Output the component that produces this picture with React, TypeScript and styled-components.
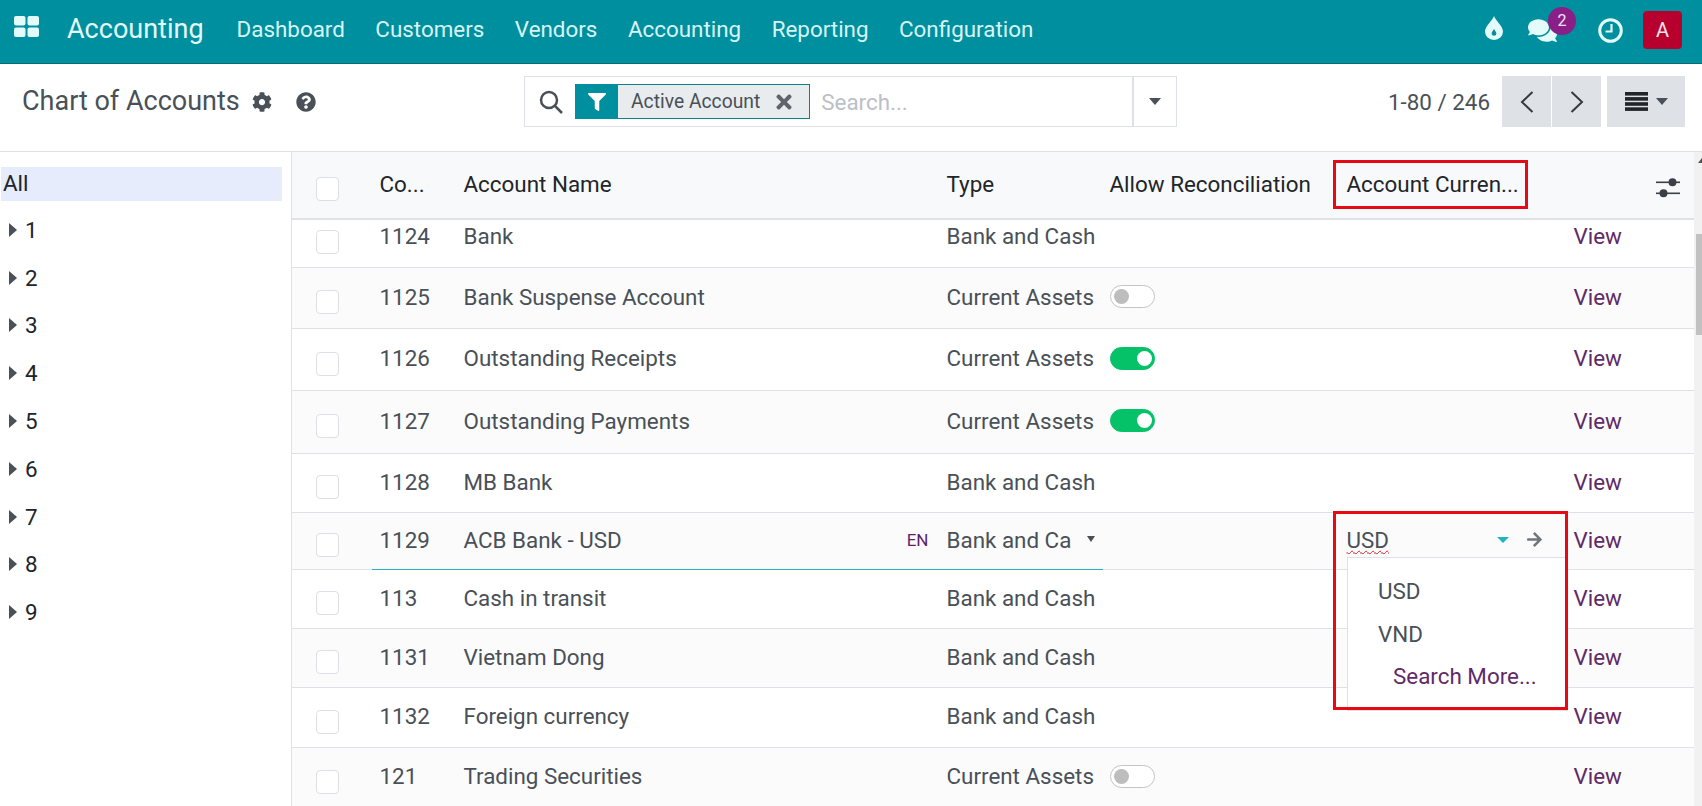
import styled, { createGlobalStyle } from "styled-components";
import { FaCog, FaQuestionCircle, FaFilter, FaComments, FaTimes, FaArrowRight } from "react-icons/fa";

const GlobalStyle = createGlobalStyle`
  html, body {
    margin: 0;
    height: 100%;
    overflow: hidden;
    background: #ffffff;
  }

  * {
    box-sizing: border-box;
  }

  body {
    font-family: Roboto, "Liberation Sans", sans-serif;
    font-size: 22.4px;
    color: #495057;
  }
`;

const MENU = ["Dashboard", "Customers", "Vendors", "Accounting", "Reporting", "Configuration"];
const TREE = ["1", "2", "3", "4", "5", "6", "7", "8", "9"];

type Account = {
  code: string;
  name: string;
  type: string;
  height: number;
  reconcile?: boolean;
  editing?: boolean;
};

const ACCOUNTS: Account[] = [
  { code: "1124", name: "Bank", type: "Bank and Cash", height: 60 },
  { code: "1125", name: "Bank Suspense Account", type: "Current Assets", height: 61, reconcile: false },
  { code: "1126", name: "Outstanding Receipts", type: "Current Assets", height: 62, reconcile: true },
  { code: "1127", name: "Outstanding Payments", type: "Current Assets", height: 63, reconcile: true },
  { code: "1128", name: "MB Bank", type: "Bank and Cash", height: 59 },
  { code: "1129", name: "ACB Bank - USD", type: "Bank and Ca", height: 57, editing: true },
  { code: "113", name: "Cash in transit", type: "Bank and Cash", height: 59 },
  { code: "1131", name: "Vietnam Dong", type: "Bank and Cash", height: 59 },
  { code: "1132", name: "Foreign currency", type: "Bank and Cash", height: 60 },
  { code: "121", name: "Trading Securities", type: "Current Assets", height: 60, reconcile: false },
];

const App = () => {
  return (
    <Page>
      <GlobalStyle />
      <Navbar>
        <AppsIcon viewBox="0 0 25 21">
          <rect x="0" y="0" width="11.5" height="9.5" rx="2" />
          <rect x="13.5" y="0" width="11.5" height="9.5" rx="2" />
          <rect x="0" y="11.5" width="11.5" height="9.5" rx="2" />
          <rect x="13.5" y="11.5" width="11.5" height="9.5" rx="2" />
        </AppsIcon>
        <Brand>Accounting</Brand>
        <Menu>
          {MENU.map((item) => (
            <MenuItem key={item}>{item}</MenuItem>
          ))}
        </Menu>
        <Systray>
          <DropIcon width="18" height="24" viewBox="0 0 18 24" fill="#e3fbfb">
            <path
              fillRule="evenodd"
              d="M9 0C10 4 18 10 18 15.5A9 8.5 0 0 1 0 15.5C0 10 8 4 9 0ZM9 13C8 15 6.6 16 6.6 17.4A2.4 2.4 0 0 0 11.4 17.4C11.4 16 10 15 9 13Z"
            />
          </DropIcon>
          <ChatButton>
            <FaComments size={29} color="#e3fbfb" />
            <Badge>2</Badge>
          </ChatButton>
          <svg width="25" height="25" viewBox="0 0 25 25" fill="none" stroke="#e3fbfb">
            <circle cx="12.5" cy="12.5" r="10.8" strokeWidth="3" />
            <path d="M13.5 6V13.5H7.5" strokeWidth="2.2" />
          </svg>
          <Avatar>A</Avatar>
        </Systray>
      </Navbar>

      <ControlPanel>
        <TitleBox>
          <Title>Chart of Accounts</Title>
          <FaCog size={20} color="#495057" />
          <HelpIcon size={20} color="#495057" />
        </TitleBox>
        <SearchBox>
          <SearchMain>
            <svg width="24" height="24" viewBox="0 0 24 24" fill="none" stroke="#495057" strokeWidth="2.5">
              <circle cx="10" cy="10" r="8" />
              <path d="M16 16L23 23" />
            </svg>
            <Facet>
              <FacetIcon>
                <FaFilter size={18} color="#ffffff" />
              </FacetIcon>
              <FacetLabel>Active Account</FacetLabel>
              <FacetClose>
                <FaTimes size={22} color="#5f656b" />
              </FacetClose>
            </Facet>
            <SearchPlaceholder>Search...</SearchPlaceholder>
          </SearchMain>
          <SearchToggle>
            <Caret />
          </SearchToggle>
        </SearchBox>
        <PagerBox>
          <PagerText>1-80 / 246</PagerText>
          <PagerButtons>
            <GreyButton>
              <svg width="14" height="22" viewBox="0 0 14 22" fill="none" stroke="#343a40" strokeWidth="2">
                <path d="M12.5 1L2 11L12.5 21" />
              </svg>
            </GreyButton>
            <GreyButton>
              <svg width="14" height="22" viewBox="0 0 14 22" fill="none" stroke="#343a40" strokeWidth="2">
                <path d="M1.5 1L12 11L1.5 21" />
              </svg>
            </GreyButton>
          </PagerButtons>
          <ViewButton>
            <svg width="23" height="19" viewBox="0 0 23 19" fill="#212529">
              <rect y="0" width="23" height="3.6" />
              <rect y="5.1" width="23" height="3.6" />
              <rect y="10.2" width="23" height="3.6" />
              <rect y="15.3" width="23" height="3.6" />
            </svg>
            <Caret />
          </ViewButton>
        </PagerBox>
      </ControlPanel>

      <Content>
        <Sidebar>
          <AllRow>All</AllRow>
          {TREE.map((item) => (
            <TreeRow key={item}>
              <TreeArrow />
              {item}
            </TreeRow>
          ))}
        </Sidebar>

        <TableArea>
          <HeadRow>
            <CheckCell>
              <Checkbox />
            </CheckCell>
            <Cell>Co...</Cell>
            <Cell>Account Name</Cell>
            <Cell>Type</Cell>
            <Cell>Allow Reconciliation</Cell>
            <Cell>
              Account Curren...
              <HeadMark />
            </Cell>
            <OptionalCell>
              <svg width="24" height="20" viewBox="0 0 24 20" fill="#3b4046">
                <rect y="3.5" width="24" height="1.6" />
                <rect y="14.5" width="24" height="1.6" />
                <circle cx="16.5" cy="4.3" r="4" />
                <circle cx="7.5" cy="15.3" r="4" />
              </svg>
            </OptionalCell>
          </HeadRow>

          <BodyClip>
            <BodyScroll>
              {ACCOUNTS.map((account, index) => (
                <Row key={account.code} $height={account.height} $striped={index % 2 === 1}>
                  <CheckCell>
                    <Checkbox />
                  </CheckCell>
                  <Cell>{account.code}</Cell>
                  <NameCell>
                    {account.name}
                    {account.editing && <LangTag>EN</LangTag>}
                  </NameCell>
                  {account.editing ? (
                    <Cell>
                      <TypeValue>{account.type}</TypeValue>
                      <SmallCaret />
                    </Cell>
                  ) : (
                    <Cell>{account.type}</Cell>
                  )}
                  <Cell>{account.reconcile !== undefined && <Toggle $on={account.reconcile} />}</Cell>
                  {account.editing ? (
                    <CurrencyCell>
                      <CurrencyValue>USD</CurrencyValue>
                      <TealCaret />
                      <FaArrowRight size={17} color="#71757a" />
                      <Dropdown>
                        <DropdownItem>USD</DropdownItem>
                        <DropdownItem>VND</DropdownItem>
                        <SearchMore>Search More...</SearchMore>
                      </Dropdown>
                      <DropdownMark />
                    </CurrencyCell>
                  ) : (
                    <Cell />
                  )}
                  <ViewCell>View</ViewCell>
                  {account.editing && <EditLine />}
                </Row>
              ))}
            </BodyScroll>
          </BodyClip>
        </TableArea>

        <Scrollbar>
          <ScrollArrow />
          <ScrollThumb />
        </Scrollbar>
      </Content>
    </Page>
  );
};

const COLUMNS = "78.5px 84px 483px 163px 237px 227px 1fr";

const Page = styled.div`
  display: flex;
  flex-direction: column;
  width: 1702px;
  height: 806px;
  overflow: hidden;
`;

const Navbar = styled.nav`
  display: flex;
  align-items: center;
  flex: none;
  height: 64px;
  padding: 0 20px 0 14px;
  background: #008f9e;
  border-bottom: 1px solid #0b6a72;
`;

const AppsIcon = styled.svg`
  flex: none;
  width: 25px;
  height: 21px;
  margin-bottom: 10px;
  fill: #e3fbfb;
`;

const Brand = styled.div`
  margin: 0 0 6px 28px;
  font-size: 27px;
  color: #e3fbfb;
`;

const Menu = styled.div`
  display: flex;
  gap: 30.5px;
  margin: 0 0 5px 33px;
`;

const MenuItem = styled.div`
  color: #d8f5f6;
`;

const Systray = styled.div`
  display: flex;
  align-items: center;
  margin: 0 0 3px auto;
`;

const DropIcon = styled.svg`
  margin: 0 25px 5px 0;
`;

const ChatButton = styled.div`
  position: relative;
  display: flex;
  margin-right: 41px;
`;

const Badge = styled.span`
  position: absolute;
  top: -9px;
  left: 20px;
  display: flex;
  align-items: center;
  justify-content: center;
  width: 28px;
  height: 28px;
  border-radius: 50%;
  background: #8a1f88;
  font-size: 16px;
  color: #f3e4f3;
`;

const Avatar = styled.div`
  display: flex;
  align-items: center;
  justify-content: center;
  width: 39px;
  height: 38px;
  margin-left: 20px;
  border-radius: 4px;
  background: #b8002e;
  font-size: 20px;
  color: #f5e6ea;
`;

const ControlPanel = styled.header`
  display: grid;
  grid-template-columns: 502px 653px 1fr;
  flex: none;
  height: 88px;
  padding: 12px 17px 0 22px;
  border-bottom: 1px solid #dee2e6;
`;

const TitleBox = styled.div`
  display: flex;
  align-items: center;
  height: 51px;
`;

const Title = styled.h1`
  margin: 0 12px 2px 0;
  font-size: 27px;
  font-weight: 400;
  color: #495057;
`;

const HelpIcon = styled(FaQuestionCircle)`
  margin-left: 24px;
`;

const SearchBox = styled.div`
  display: flex;
  height: 51px;
  border: 1px solid #dee2e6;
`;

const SearchMain = styled.div`
  display: flex;
  align-items: center;
  flex: 1;
  padding-left: 14px;
`;

const Facet = styled.div`
  display: flex;
  align-items: stretch;
  height: 35px;
  margin-left: 12px;
  border: 1px solid #0f7f8b;
  background: #e9ecef;
`;

const FacetIcon = styled.div`
  display: flex;
  align-items: center;
  justify-content: center;
  width: 43px;
  margin: -1px 0 -1px -1px;
  background: #008f9e;
`;

const FacetLabel = styled.span`
  display: flex;
  align-items: center;
  margin-left: 13px;
  font-size: 19.3px;
`;

const FacetClose = styled.span`
  display: flex;
  align-items: center;
  margin: 0 14px 0 13px;
`;

const SearchPlaceholder = styled.span`
  margin-left: 11px;
  color: #bcc0c6;
`;

const SearchToggle = styled.div`
  display: flex;
  align-items: center;
  justify-content: center;
  width: 44px;
  border-left: 2px solid #dee2e6;
`;

const Caret = styled.span`
  width: 0;
  height: 0;
  border-top: 7px solid #495057;
  border-left: 6.5px solid transparent;
  border-right: 6.5px solid transparent;
`;

const PagerBox = styled.div`
  display: flex;
  justify-content: flex-end;
  height: 51px;
`;

const PagerText = styled.span`
  align-self: center;
  margin-right: 12px;
`;

const PagerButtons = styled.div`
  display: flex;
  gap: 1px;
  margin-right: 6px;
`;

const GreyButton = styled.div`
  display: flex;
  align-items: center;
  justify-content: center;
  width: 49px;
  background: #dee2e6;
`;

const ViewButton = styled.div`
  display: flex;
  align-items: center;
  justify-content: center;
  gap: 8px;
  width: 78px;
  background: #dee2e6;
`;

const Content = styled.main`
  display: flex;
  flex: 1;
  min-height: 0;
`;

const Sidebar = styled.aside`
  flex: none;
  width: 292px;
  padding: 15px 9px 0 1px;
  border-right: 1px solid #dee2e6;
  color: #212529;
`;

const AllRow = styled.div`
  display: flex;
  align-items: center;
  height: 34px;
  margin-bottom: 5px;
  padding: 0 0 2px 2px;
  background: #e6ecfb;
`;

const TreeRow = styled.div`
  display: flex;
  align-items: center;
  height: 47.8px;
  padding-left: 8px;
`;

const TreeArrow = styled.span`
  width: 0;
  height: 0;
  margin-right: 8px;
  border-left: 8px solid #495057;
  border-top: 7px solid transparent;
  border-bottom: 7px solid transparent;
`;

const TableArea = styled.section`
  display: flex;
  flex-direction: column;
  flex: 1;
  min-width: 0;
`;

const HeadRow = styled.div`
  position: relative;
  display: grid;
  grid-template-columns: ${COLUMNS};
  flex: none;
  height: 68px;
  border-bottom: 2px solid #dee2e6;
  background: #f8f9fa;
  color: #212529;

  & > div:not(:first-child):not(:last-child) {
    padding-bottom: 2px;
  }
`;

const BodyClip = styled.div`
  flex: 1;
  min-height: 0;
  overflow: hidden;
`;

const BodyScroll = styled.div`
  margin-top: -12px;
`;

const Row = styled.div<{ $height: number; $striped: boolean }>`
  position: relative;
  display: grid;
  grid-template-columns: ${COLUMNS};
  height: ${(props) => props.$height}px;
  border-bottom: 1px solid #dee2e6;
  background: ${(props) => (props.$striped ? "#fbfbfb" : "#ffffff")};

  & > div:not(:first-child) {
    padding-bottom: 3px;
  }
`;

const Cell = styled.div`
  position: relative;
  display: flex;
  align-items: center;
  padding-left: 9px;
  white-space: nowrap;
`;

const CheckCell = styled.div`
  display: flex;
  align-items: center;
  padding-left: 24px;
`;

const Checkbox = styled.span`
  width: 23px;
  height: 24px;
  margin-top: 8px;
  border: 1px solid #dcdfe3;
  border-radius: 4px;
  background: #ffffff;
`;

const NameCell = styled(Cell)`
  justify-content: space-between;
  padding-right: 9px;
`;

const LangTag = styled.span`
  font-size: 17px;
  color: #5f1f6b;
`;

const TypeValue = styled.span`
  width: 125px;
`;

const SmallCaret = styled.span`
  width: 0;
  height: 0;
  margin: 0 0 2px 15px;
  border-top: 6px solid #495057;
  border-left: 4.5px solid transparent;
  border-right: 4.5px solid transparent;
`;

const Toggle = styled.span<{ $on: boolean }>`
  position: relative;
  width: 45px;
  height: 23px;
  border-radius: 12px;
  border: 1px solid ${(props) => (props.$on ? "#05c167" : "#c4c4c4")};
  background: ${(props) => (props.$on ? "#05c167" : "#ffffff")};

  &::after {
    content: "";
    position: absolute;
    top: 3px;
    left: ${(props) => (props.$on ? "26px" : "3px")};
    width: 15px;
    height: 15px;
    border-radius: 50%;
    background: ${(props) => (props.$on ? "#ffffff" : "#bdbdbd")};
  }
`;

const CurrencyCell = styled(Cell)`
  padding-right: 22px;
`;

const CurrencyValue = styled.span`
  flex: 1;
  text-decoration: underline wavy #d0232a 1px;
  text-underline-offset: 2px;
`;

const TealCaret = styled.span`
  width: 0;
  height: 0;
  margin-right: 17px;
  border-top: 6px solid #1fb3c4;
  border-left: 6px solid transparent;
  border-right: 6px solid transparent;
`;

const Dropdown = styled.div`
  position: absolute;
  z-index: 2;
  top: 44px;
  left: 9.5px;
  display: flex;
  flex-direction: column;
  width: 221px;
  height: 154px;
  padding: 11.5px 0 0 30px;
  border: 1px solid #dee2e6;
  background: #ffffff;
`;

const DropdownItem = styled.div`
  height: 43px;
  line-height: 43px;
`;

const SearchMore = styled.div`
  height: 40px;
  line-height: 40px;
  margin-left: 15px;
  color: #5f2a67;
`;

const HeadMark = styled.span`
  position: absolute;
  top: 8px;
  left: -4.5px;
  width: 195px;
  height: 49px;
  border: 3px solid #e60a14;
`;

const DropdownMark = styled.span`
  position: absolute;
  z-index: 3;
  top: -2px;
  left: -4.5px;
  width: 235px;
  height: 199px;
  border: 3px solid #e60a14;
`;

const ViewCell = styled(Cell)`
  color: #5f2a67;
`;

const OptionalCell = styled(Cell)`
  justify-content: flex-end;
  padding: 5px 14px 0 0;
`;

const EditLine = styled.span`
  position: absolute;
  left: 79.5px;
  bottom: -1px;
  width: 731px;
  height: 1px;
  background: #27b5b8;
`;

const Scrollbar = styled.div`
  position: relative;
  flex: none;
  width: 8px;
  background: #f1f1f1;
`;

const ScrollArrow = styled.span`
  position: absolute;
  top: 6px;
  right: 0;
  width: 0;
  height: 0;
  border-bottom: 5px solid #505050;
  border-left: 4px solid transparent;
`;

const ScrollThumb = styled.span`
  position: absolute;
  top: 82px;
  right: 0;
  width: 6px;
  height: 101px;
  background: #c1c1c1;
`;

export default App;
